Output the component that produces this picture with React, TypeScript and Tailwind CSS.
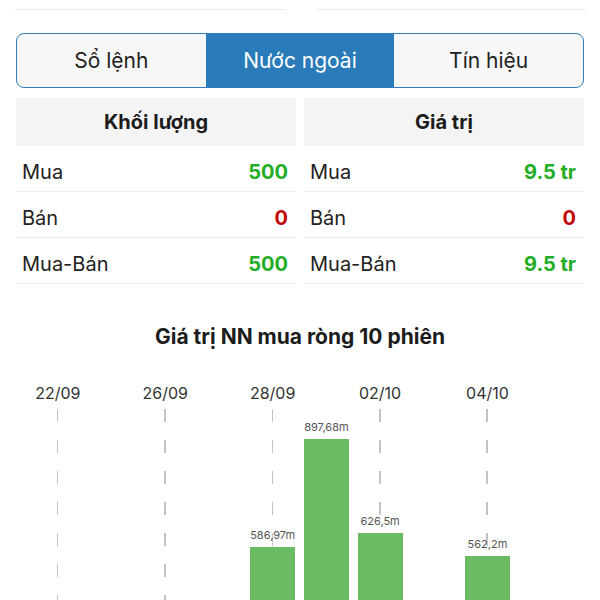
import React from "react";

const tabs = ["Sổ lệnh", "Nước ngoài", "Tín hiệu"];

interface Row {
  label: string;
  value: string;
  tone: "up" | "down";
}

const volumeRows: Row[] = [
  { label: "Mua", value: "500", tone: "up" },
  { label: "Bán", value: "0", tone: "down" },
  { label: "Mua-Bán", value: "500", tone: "up" },
];

const valueRows: Row[] = [
  { label: "Mua", value: "9.5 tr", tone: "up" },
  { label: "Bán", value: "0", tone: "down" },
  { label: "Mua-Bán", value: "9.5 tr", tone: "up" },
];

interface Session {
  date: string;
  value: number | null;
  text?: string;
}

const sessions: Session[] = [
  { date: "22/09", value: null },
  { date: "25/09", value: null },
  { date: "26/09", value: null },
  { date: "27/09", value: null },
  { date: "28/09", value: 586.97, text: "586,97m" },
  { date: "29/09", value: 897.68, text: "897,68m" },
  { date: "02/10", value: 626.5, text: "626,5m" },
  { date: "03/10", value: null },
  { date: "04/10", value: 562.2, text: "562,2m" },
  { date: "05/10", value: null },
];

// px per million
const SCALE = 0.3476;

function StatTable({ title, rows }: { title: string; rows: Row[] }) {
  return (
    <div className="flex-1 flex flex-col">
      <div className="h-[48px] bg-[#f4f4f4] flex items-center justify-center text-[20px] font-bold text-[#1c1c1c]">
        {title}
      </div>
      {rows.map((r) => (
        <div
          key={r.label}
          className="h-[46px] flex items-center justify-between pt-[6px] pl-[6px] pr-[8px] border-b border-[#ebebeb]"
        >
          <span className="text-[20px] text-[#222]">{r.label}</span>
          <span
            className={
              r.tone === "up"
                ? "text-[20px] font-bold text-[#22ad24]"
                : "text-[20px] font-bold text-[#c20606]"
            }
          >
            {r.value}
          </span>
        </div>
      ))}
    </div>
  );
}

export default function App() {
  return (
    <div className="w-[600px] bg-white font-['Inter','Noto_Sans',sans-serif] text-[#222]">
      {/* bottoms of the cards above */}
      <div className="flex h-[10px] pl-[15px] pr-[14px] gap-[30px]">
        <div className="flex-1 border-b border-[#ececec]" />
        <div className="flex-1 border-b border-[#ececec]" />
      </div>

      <div className="px-4">
        {/* segmented tabs */}
        <div className="mt-[23px] h-[55px] grid grid-cols-3 rounded-[8px] border-[1.5px] border-[#2f7dbb] overflow-hidden bg-[#f7f7f7]">
          {tabs.map((t, i) => (
            <div
              key={t}
              className={
                i === 1
                  ? "flex items-center justify-center bg-[#2a7bb9] text-white text-[21px]"
                  : "flex items-center justify-center text-[#222] text-[21px]"
              }
            >
              {t}
            </div>
          ))}
        </div>

        {/* volume / value */}
        <div className="mt-[10px] flex gap-[8px]">
          <StatTable title="Khối lượng" rows={volumeRows} />
          <StatTable title="Giá trị" rows={valueRows} />
        </div>

        <div className="mt-[39px] h-[28px] flex items-center justify-center text-[21px] font-bold text-[#1c1c1c]">
          Giá trị NN mua ròng 10 phiên
        </div>
      </div>

      {/* chart */}
      <div className="mt-[32px] pl-[31px] pr-[32px] flex">
        {sessions.map((s, i) => (
          <div key={s.date} className="flex-1 h-[368px] flex flex-col">
            <div className="h-[20px] flex items-center justify-center text-[16px] text-[#333]">
              {i % 2 === 0 ? s.date : ""}
            </div>
            <div className="relative flex-1 flex flex-col items-center justify-end">
              {i % 2 === 0 && (
                <div className="absolute top-[6px] bottom-0 left-1/2 -ml-[1px] w-[1.5px] bg-[repeating-linear-gradient(to_bottom,#c3c3c3_0px,#c3c3c3_13px,transparent_13px,transparent_31px)]" />
              )}
              {s.value !== null && (
                <>
                  <div className="relative mb-[5px] text-[11px] leading-[13px] text-[#555] whitespace-nowrap">
                    {s.text}
                  </div>
                  <div
                    className="relative w-[45px] bg-[#6bbb65]"
                    style={{ height: `${s.value * SCALE}px` }}
                  />
                </>
              )}
            </div>
          </div>
        ))}
      </div>
    </div>
  );
}
